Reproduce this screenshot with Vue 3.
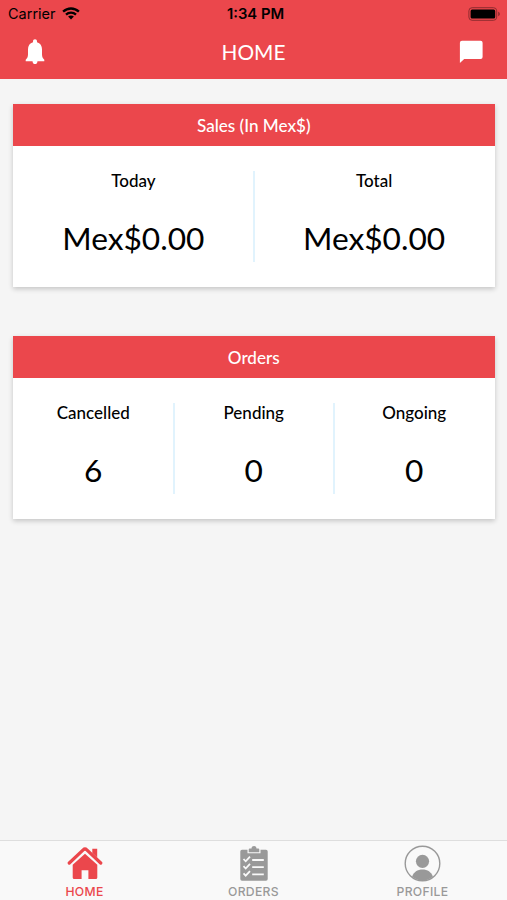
<script setup>
const cards = [
  {
    title: 'Sales (In Mex$)',
    items: [
      { label: 'Today', value: 'Mex$0.00' },
      { label: 'Total', value: 'Mex$0.00' },
    ],
  },
  {
    title: 'Orders',
    items: [
      { label: 'Cancelled', value: '6' },
      { label: 'Pending', value: '0' },
      { label: 'Ongoing', value: '0' },
    ],
  },
]
</script>

<template>
  <div class="screen">
    <header class="top">
      <div class="status">
        <div class="carrier">
          <span>Carrier</span>
          <svg width="18" height="14" viewBox="0 0 18 14">
            <g fill="none" stroke="#000" stroke-width="2.3">
              <path d="M1.1 4.7C5.6.4 12.4.4 16.9 4.7" />
              <path d="M4 7.7C6.8 5 11.2 5 14 7.7" />
            </g>
            <path d="M6.1 9.6C7.7 8.1 10.3 8.1 11.9 9.6L9 12.5z" />
          </svg>
        </div>
        <span class="time">1:34 PM</span>
        <svg class="battery" width="33" height="14" viewBox="0 0 33 14">
          <rect x=".9" y=".7" width="27.8" height="12.6" rx="3.2" fill="none" stroke="#8f2c2f" stroke-width="1" />
          <rect x="2.6" y="2.4" width="24.6" height="9.2" rx="1.5" />
          <path d="M30.2 4.8C32.4 5.5 32.4 8.5 30.2 9.2z" fill="#8f2c2f" />
        </svg>
      </div>
      <div class="nav">
        <svg width="20" height="26" viewBox="0 0 20 26" fill="#fff">
          <path d="M10 .3C8.8.3 8 1.2 8 2.4V3.2C4.7 4.1 3 6.9 3 10.3V15.5C3 18.4 1.9 19.5.7 20.8V22.3H19.3V20.8C18.1 19.5 17 18.4 17 15.5V10.3C17 6.9 15.3 4.1 12 3.2V2.4C12 1.2 11.2.3 10 .3z" />
          <path d="M7.5 22H12.5C12.3 24.4 11.4 25.1 10 25.1S7.7 24.4 7.5 22z" />
        </svg>
        <h1>HOME</h1>
        <svg width="24" height="24" viewBox="0 0 24 24" fill="#fff">
          <path d="M3 .8H21.6Q23.6.8 23.6 2.8V17Q23.6 19 21.6 19H5.2L.9 23V2.8Q.9.8 3 .8z" />
        </svg>
      </div>
    </header>

    <main>
      <section v-for="card in cards" :key="card.title" class="card">
        <h2>{{ card.title }}</h2>
        <div class="stats">
          <div v-for="item in card.items" :key="item.label" class="stat">
            <span class="label">{{ item.label }}</span>
            <span class="value">{{ item.value }}</span>
          </div>
        </div>
      </section>
    </main>

    <nav class="tabs">
      <a class="tab active">
        <svg width="36" height="36" viewBox="0 0 36 36" fill="none" stroke="currentColor">
          <path d="M2.3 18L16.2 4.9Q18 3.2 19.8 4.9L33.7 18" stroke-width="3.3" stroke-linecap="round" stroke-linejoin="round" />
          <path d="M25.3 3.7H30.2V12.5L25.3 8z" fill="currentColor" stroke="none" />
          <path d="M5.7 19.8L18 8.8L30.3 19.8V32.5Q30.3 34 28.8 34H21.4V25.2H14.6V34H7.2Q5.7 34 5.7 32.5z" fill="currentColor" stroke="none" />
        </svg>
        <span>HOME</span>
      </a>
      <a class="tab">
        <svg width="36" height="36" viewBox="0 0 36 36" fill="currentColor">
          <path d="M6 4.7H11.5V8.3H24.5V4.7H30Q31.7 4.7 31.7 6.4V34Q31.7 35.7 30 35.7H6Q4.3 35.7 4.3 34V6.4Q4.3 4.7 6 4.7z" />
          <path d="M12.7 7.2V4.5Q12.7 3.5 13.7 3.5H15.5C15.7.3 20.3.3 20.5 3.5H22.3Q23.3 3.5 23.3 4.5V7.2z" />
          <g fill="none" stroke="#f9f9f9" stroke-width="1.8">
            <path d="M7.5 14L9.7 16.3L14 11.7M7.5 21.2L9.7 23.5L14 18.9M7.5 28.4L9.7 30.7L14 26.1" />
            <path d="M16.2 15H27.8M16.2 22.2H27.8M16.2 29.4H27.8" />
          </g>
        </svg>
        <span>ORDERS</span>
      </a>
      <a class="tab">
        <svg width="38" height="37" viewBox="0 0 38 37">
          <circle cx="18.5" cy="18.5" r="17.3" fill="none" stroke="currentColor" stroke-width="1.4" />
          <circle cx="18.5" cy="16.3" r="6.6" fill="currentColor" />
          <path d="M8.1 31.7C9.6 27.2 13.5 24.6 18.5 24.6S27.4 27.2 28.9 31.7Q24.7 35.4 18.5 35.4T8.1 31.7z" fill="currentColor" />
        </svg>
        <span>PROFILE</span>
      </a>
    </nav>
  </div>
</template>

<style>
body {
  margin: 0;
}
</style>

<style scoped>
.screen {
  display: flex;
  flex-direction: column;
  height: 900px;
  background: #f5f5f5;
  color: #000;
  font-family: Lato, sans-serif;
}
.top {
  box-sizing: border-box;
  height: 79px;
  background: #eb474c;
}
.status {
  display: grid;
  grid-template-columns: 1fr auto 1fr;
  align-items: center;
  height: 27px;
  padding: 0 6px 0 8px;
  font: 14.5px/27px Inter, sans-serif;
}
.carrier {
  display: flex;
  align-items: center;
  gap: 6px;
}
.carrier span {
  line-height: 26px;
  padding-bottom: 1px;
}
.time {
  padding: 1px 0 0 2px;
  font-size: 14.8px;
  font-weight: 600;
}
.battery {
  justify-self: end;
}
.nav {
  display: flex;
  align-items: center;
  justify-content: space-between;
  height: 50px;
  padding: 0 24px 0 25px;
}
h1 {
  margin: 0;
  padding-left: 3px;
  color: #fff;
  font-size: 20.8px;
  font-weight: 400;
  line-height: 50px;
}
main {
  flex: 1;
  display: flex;
  flex-direction: column;
  gap: 48.5px;
  padding: 24.5px 12.5px 0 13px;
}
.card {
  height: 183.5px;
  background: #fff;
  box-shadow: 0 2px 5px rgba(0, 0, 0, 0.2);
}
h2 {
  margin: 0;
  height: 42.5px;
  background: #eb474c;
  color: #fff;
  text-align: center;
  font-size: 17.1px;
  font-weight: 500;
  line-height: 43px;
}
.stats {
  display: grid;
  grid-auto-flow: column;
  grid-auto-columns: minmax(0, 1fr);
  padding-top: 25px;
}
.stat {
  box-sizing: border-box;
  display: flex;
  flex-direction: column;
  align-items: center;
  height: 91px;
}
.stat + .stat {
  margin-left: -1px;
  border-left: 2px solid #e1f3fd;
  padding-right: 1px;
}
.label {
  font-size: 17px;
  font-weight: 500;
  line-height: 20px;
}
.value {
  margin-top: 26px;
  font-size: 31.7px;
  line-height: 42px;
}
.tabs {
  box-sizing: border-box;
  display: flex;
  height: 60.5px;
  border-top: 1px solid #dedede;
  background: #f9f9f9;
}
.tab {
  flex: 1;
  display: flex;
  flex-direction: column;
  align-items: center;
  justify-content: space-between;
  padding: 4px 0 1px;
  color: #999;
  font: 500 12.2px/15px Inter, sans-serif;
  letter-spacing: 0.3px;
}
.active {
  color: #eb474c;
}
</style>
